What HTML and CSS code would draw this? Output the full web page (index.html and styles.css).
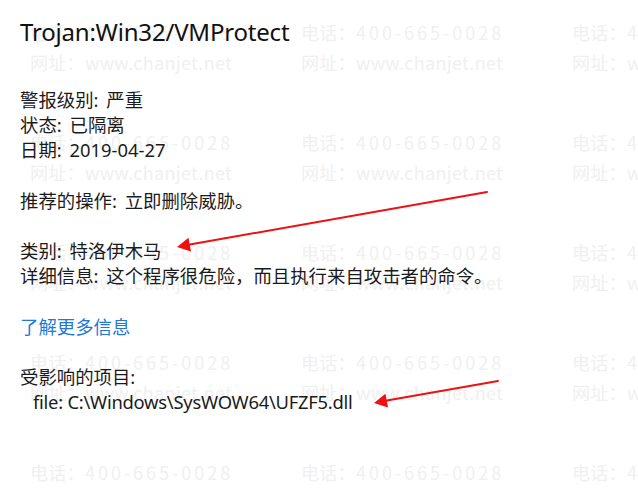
FILE: index.html
```html
<!DOCTYPE html>
<html lang="zh-CN">
<head>
<meta charset="utf-8">
<title>Trojan:Win32/VMProtect</title>
<link rel="stylesheet" href="styles.css">
</head>
<body>
<div class="watermark" aria-hidden="true">
  <div class="wm"><span>电话：<span class="num">400-665-0028</span></span><span>网址：www.chanjet.net</span></div>
  <div class="wm"><span>电话：<span class="num">400-665-0028</span></span><span>网址：www.chanjet.net</span></div>
  <div class="wm"><span>电话：<span class="num">400-665-0028</span></span><span>网址：www.chanjet.net</span></div>
  <div class="wm"><span>电话：<span class="num">400-665-0028</span></span><span>网址：www.chanjet.net</span></div>
  <div class="wm"><span>电话：<span class="num">400-665-0028</span></span><span>网址：www.chanjet.net</span></div>
  <div class="wm"><span>电话：<span class="num">400-665-0028</span></span><span>网址：www.chanjet.net</span></div>
  <div class="wm"><span>电话：<span class="num">400-665-0028</span></span><span>网址：www.chanjet.net</span></div>
  <div class="wm"><span>电话：<span class="num">400-665-0028</span></span><span>网址：www.chanjet.net</span></div>
  <div class="wm"><span>电话：<span class="num">400-665-0028</span></span><span>网址：www.chanjet.net</span></div>
  <div class="wm"><span>电话：<span class="num">400-665-0028</span></span><span>网址：www.chanjet.net</span></div>
  <div class="wm"><span>电话：<span class="num">400-665-0028</span></span><span>网址：www.chanjet.net</span></div>
  <div class="wm"><span>电话：<span class="num">400-665-0028</span></span><span>网址：www.chanjet.net</span></div>
  <div class="wm"><span>电话：<span class="num">400-665-0028</span></span><span>网址：www.chanjet.net</span></div>
  <div class="wm"><span>电话：<span class="num">400-665-0028</span></span><span>网址：www.chanjet.net</span></div>
  <div class="wm"><span>电话：<span class="num">400-665-0028</span></span><span>网址：www.chanjet.net</span></div>
</div>

<main class="page">
  <h1 class="title">Trojan:Win32/VMProtect</h1>
  <p class="para">警报级别<span class="colon">:</span> 严重<br>状态<span class="colon">:</span> 已隔离<br>日期<span class="colon">:</span> 2019-04-27</p>
  <p class="para">推荐的操作<span class="colon">:</span> 立即删除威胁。</p>
  <p class="para">类别<span class="colon">:</span> 特洛伊木马<br>详细信息<span class="colon">:</span> 这个程序很危险，而且执行来自攻击者的命令。</p>
  <p class="para"><a class="link" href="#">了解更多信息</a></p>
  <p class="para">受影响的项目:<br><span class="file">file: C:\Windows\SysWOW64\UFZF5.dll</span></p>
</main>

<svg class="arrows" width="638" height="491" viewBox="0 0 638 491" aria-hidden="true">
  <line x1="487" y1="192" x2="187" y2="245" stroke="#ee1111" stroke-width="2" stroke-linecap="round"/>
  <polygon points="177,247 191,251.5 188.5,237.8" fill="#ee1111"/>
  <line x1="498" y1="381" x2="384" y2="401" stroke="#ee1111" stroke-width="2" stroke-linecap="round"/>
  <polygon points="374,403 388,407.5 385.5,393.8" fill="#ee1111"/>
</svg>
</body>
</html>
```
FILE: styles.css
```css
html, body {
  margin: 0;
  padding: 0;
  background: #ffffff;
  overflow: hidden;
}
body {
  width: 638px;
  height: 491px;
  position: relative;
  font-family: "Noto Sans", "Noto Sans CJK SC", sans-serif;
  color: #1b1b1b;
}
.watermark {
  position: absolute;
  left: 30px;
  top: 17px;
  width: 608px;
  height: 474px;
  overflow: hidden;
  display: grid;
  grid-template-columns: repeat(3, 271px);
  grid-auto-rows: 110px;
  z-index: 0;
}
.wm {
  display: flex;
  flex-direction: column;
  font-family: "Noto Sans CJK SC", sans-serif;
  font-size: 18px;
  line-height: 30px;
  letter-spacing: 0.3px;
  color: #f0f0f0;
  white-space: nowrap;
}
.num {
  letter-spacing: 3px;
}
.page {
  position: relative;
  z-index: 1;
  padding: 16px 20px 0 20px;
}
.title {
  margin: 0 0 39px 0;
  font-family: "Noto Sans", "Noto Sans CJK SC", sans-serif;
  font-weight: 400;
  font-size: 24px;
  line-height: 32px;
  letter-spacing: -0.2px;
  color: #111111;
}
.para {
  margin: 0 0 25.2px 0;
  font-family: "Noto Sans", "Noto Sans CJK SC", sans-serif;
  font-size: 18.4px;
  line-height: 25.2px;
}
.colon {
  padding-right: 3px;
}
.link {
  color: #1f78d8;
  text-decoration: none;
}
.file {
  padding-left: 13px;
  letter-spacing: -0.25px;
}
.arrows {
  position: absolute;
  left: 0;
  top: 0;
  z-index: 2;
}
```
